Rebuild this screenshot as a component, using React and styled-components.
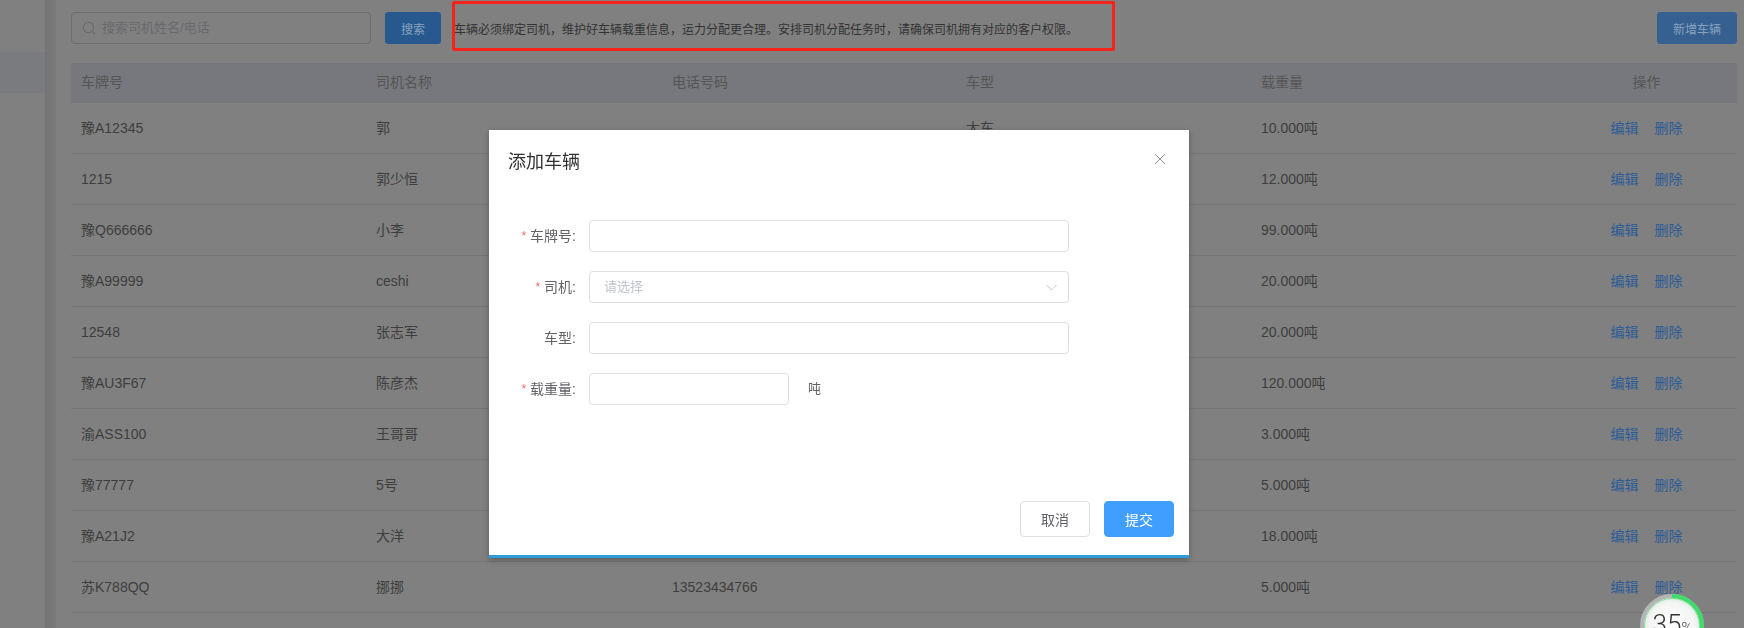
import React from 'react';
import styled, { createGlobalStyle } from 'styled-components';

const GlobalStyle = createGlobalStyle`
  html, body {
    margin: 0;
    height: 100%;
    overflow: hidden;
    background: #808080;
    font-family: "Liberation Sans", "Noto Sans CJK SC", sans-serif;
  }
  * {
    box-sizing: border-box;
  }
`;

// the page sits under the modal mask, so its colours are the dimmed ones
const Page = styled.div`
  display: flex;
  width: 100%;
  height: 100vh;
  overflow: hidden;
  background: #808080;
`;

const Sidebar = styled.aside`
  width: 45px;
  flex-shrink: 0;
  padding-top: 52px;
`;

const SideItem = styled.div`
  height: 41px;
  background: #7a7b7f;
`;

const Gutter = styled.div`
  width: 11px;
  flex-shrink: 0;
  background: linear-gradient(to right, #747476, #7b7b7c);
`;

const Main = styled.main`
  flex: 1;
  min-width: 0;
  padding: 12px 7px 0 15px;
`;

const Toolbar = styled.div`
  display: flex;
  align-items: center;
  height: 32px;
  margin-bottom: 19px;
`;

const SearchBox = styled.div`
  display: flex;
  align-items: center;
  gap: 6px;
  width: 300px;
  height: 32px;
  padding-left: 10px;
  border: 1px solid #6e6f73;
  border-radius: 4px;
  font-size: 13px;
  line-height: 18px;
  color: #696a6d;
`;

const SearchButton = styled.button`
  width: 56px;
  height: 32px;
  margin-left: 14px;
  padding: 0;
  border: 0;
  border-radius: 3px;
  background: ${(p) => p.$tone};
  color: #8aa2bf;
  font: inherit;
  font-size: 12px;
`;

const Notice = styled.span`
  margin-left: 13px;
  font-size: 12px;
  color: #333;
  white-space: nowrap;
`;

const AddButton = styled(SearchButton)`
  width: 80px;
  margin-left: auto;
`;

const Columns = styled.div`
  display: grid;
  grid-template-columns: 295px 296px 294px 295px 305px 1fr;
  align-items: center;
  font-size: 14px;
  line-height: 20px;
`;

const HeadRow = styled(Columns)`
  height: 40px;
  padding-bottom: 3px;
  background: #76787d;
  color: #555;
`;

const BodyRow = styled(Columns)`
  height: 51px;
  padding-bottom: 1px;
  border-bottom: 1px solid #747579;
  color: #3e3e3e;
`;

const Cell = styled.div`
  padding-left: 10px;
  white-space: nowrap;
`;

const ActionHead = styled.div`
  text-align: center;
`;

const Actions = styled.div`
  display: flex;
  justify-content: center;
  gap: 16px;
  padding-top: 1px;
  color: #2b5c98;
`;

const Annotation = styled.div`
  position: fixed;
  left: 452px;
  top: 1px;
  width: 663px;
  height: 50px;
  border: 3px solid #f5231a;
  border-radius: 2px;
`;

const Modal = styled.section`
  position: fixed;
  left: 489px;
  top: 130px;
  display: flex;
  flex-direction: column;
  width: 700px;
  height: 428px;
  background: #fff;
  border-bottom: 3px solid #2d9cdb;
  box-shadow: 0 2px 6px rgba(0, 0, 0, 0.3);
`;

const ModalHead = styled.header`
  display: flex;
  align-items: flex-start;
  justify-content: space-between;
  padding: 19px 23px 0 19px;
  height: 90px;
`;

const ModalTitle = styled.h2`
  margin: 0;
  font-size: 18px;
  line-height: 26px;
  font-weight: 400;
  color: #303133;
`;

const CloseIcon = styled.svg`
  width: 12px;
  height: 12px;
  margin-top: 4px;
  stroke: #909399;
  stroke-width: 1;
  fill: none;
`;

const Form = styled.div`
  display: flex;
  flex-direction: column;
  gap: 19px;
  flex: 1;
`;

const FormRow = styled.div`
  display: flex;
  align-items: center;
  height: 32px;
`;

const Label = styled.label`
  display: flex;
  justify-content: flex-end;
  align-items: center;
  width: 87px;
  margin-right: 13px;
  padding-bottom: 1px;
  font-size: 14px;
  line-height: 20px;
  color: #606266;
  white-space: nowrap;
`;

const Star = styled.span`
  margin-right: 4px;
  font-size: 12px;
  color: #f56c6c;
`;

const Field = styled.div`
  display: flex;
  align-items: center;
  justify-content: space-between;
  width: ${(p) => p.$width}px;
  height: 32px;
  padding: 0 11px 0 14px;
  border: 1px solid #dcdfe6;
  border-radius: 4px;
  font-size: 13px;
  line-height: 18px;
  color: #c0c4cc;
  background: #fff;
`;

const Unit = styled.span`
  margin-left: 19px;
  font-size: 13px;
  line-height: 18px;
  color: #606266;
`;

const ModalFoot = styled.footer`
  display: flex;
  justify-content: flex-end;
  gap: 14px;
  padding: 0 15px 18px 0;
`;

const FootButton = styled.button`
  width: 70px;
  height: 36px;
  padding: 0;
  border: 1px solid ${(p) => (p.$primary ? '#409eff' : '#dcdfe6')};
  border-radius: 4px;
  background: ${(p) => (p.$primary ? '#409eff' : '#fff')};
  color: ${(p) => (p.$primary ? '#fff' : '#606266')};
  font: inherit;
  font-size: 14px;
`;

const Progress = styled.div`
  position: fixed;
  left: 1640px;
  top: 594px;
  width: 64px;
  height: 64px;
`;

const ProgressRing = styled.svg`
  display: block;
  width: 64px;
  height: 64px;
`;

const ProgressText = styled.div`
  position: absolute;
  left: 1px;
  right: 0;
  top: 14px;
  text-align: center;
  font-family: Roboto, "Liberation Sans", sans-serif;
  font-weight: 300;
  font-size: 26px;
  line-height: 32px;
  white-space: nowrap;
  color: #333;
`;

const Percent = styled.span`
  font-size: 15px;
`;

const rows = [
  ['豫A12345', '郭', '', '大车', '10.000吨'],
  ['1215', '郭少恒', '', '', '12.000吨'],
  ['豫Q666666', '小李', '', '', '99.000吨'],
  ['豫A99999', 'ceshi', '', '', '20.000吨'],
  ['12548', '张志军', '', '', '20.000吨'],
  ['豫AU3F67', '陈彦杰', '', '', '120.000吨'],
  ['渝ASS100', '王哥哥', '', '', '3.000吨'],
  ['豫77777', '5号', '', '', '5.000吨'],
  ['豫A21J2', '大洋', '', '', '18.000吨'],
  ['苏K788QQ', '挪挪', '13523434766', '', '5.000吨'],
];

const headers = ['车牌号', '司机名称', '电话号码', '车型', '载重量'];

const App = () => (
  <>
    <GlobalStyle />
    <Page>
      <Sidebar>
        <SideItem />
      </Sidebar>
      <Gutter />
      <Main>
        <Toolbar>
          <SearchBox>
            <svg width="14" height="14" viewBox="0 0 14 14" fill="none" stroke="#696a6d" strokeWidth="1.1">
              <circle cx="6.5" cy="6.5" r="5.2" />
              <path d="M10.4 10.4L13 13" />
            </svg>
            搜索司机姓名/电话
          </SearchBox>
          <SearchButton $tone="#27598f">搜索</SearchButton>
          <Notice>车辆必须绑定司机，维护好车辆载重信息，运力分配更合理。安排司机分配任务时，请确保司机拥有对应的客户权限。</Notice>
          <AddButton $tone="#36608f">新增车辆</AddButton>
        </Toolbar>
        <HeadRow>
          {headers.map((h) => (
            <Cell key={h}>{h}</Cell>
          ))}
          <ActionHead>操作</ActionHead>
        </HeadRow>
        {rows.map((row) => (
          <BodyRow key={row[0]}>
            {row.map((value, i) => (
              <Cell key={i}>{value}</Cell>
            ))}
            <Actions>
              <span>编辑</span>
              <span>删除</span>
            </Actions>
          </BodyRow>
        ))}
      </Main>
    </Page>
    <Annotation />
    <Modal>
      <ModalHead>
        <ModalTitle>添加车辆</ModalTitle>
        <CloseIcon viewBox="0 0 12 12">
          <path d="M1 1L11 11M11 1L1 11" />
        </CloseIcon>
      </ModalHead>
      <Form>
        <FormRow>
          <Label><Star>*</Star>车牌号:</Label>
          <Field $width={480} />
        </FormRow>
        <FormRow>
          <Label><Star>*</Star>司机:</Label>
          <Field $width={480}>
            请选择
            <svg width="11" height="7" viewBox="0 0 11 7" fill="none" stroke="#c0c4cc" strokeWidth="1">
              <path d="M0.5 1L5.5 6L10.5 1" />
            </svg>
          </Field>
        </FormRow>
        <FormRow>
          <Label>车型:</Label>
          <Field $width={480} />
        </FormRow>
        <FormRow>
          <Label><Star>*</Star>载重量:</Label>
          <Field $width={200} />
          <Unit>吨</Unit>
        </FormRow>
      </Form>
      <ModalFoot>
        <FootButton>取消</FootButton>
        <FootButton $primary>提交</FootButton>
      </ModalFoot>
    </Modal>
    <Progress>
      <ProgressRing viewBox="0 0 64 64">
        <defs>
          <radialGradient id="ringFill" cx="50%" cy="50%" r="50%">
            <stop offset="0%" stopColor="#ffffff" />
            <stop offset="75%" stopColor="#f4f6f4" />
            <stop offset="100%" stopColor="#dfe8e0" />
          </radialGradient>
        </defs>
        <circle cx="32" cy="32" r="30" fill="url(#ringFill)" stroke="#b5b5b5" strokeWidth="4" />
        <circle cx="32" cy="32" r="27.5" fill="none" stroke="#7fe69a" strokeWidth="1" />
        <circle
          cx="32"
          cy="32"
          r="30"
          fill="none"
          stroke="#3fdc6a"
          strokeWidth="4"
          pathLength="100"
          strokeDasharray="35 65"
          transform="rotate(-90 32 32)"
        />
      </ProgressRing>
      <ProgressText>
        35<Percent>%</Percent>
      </ProgressText>
    </Progress>
  </>
);

export default App;
